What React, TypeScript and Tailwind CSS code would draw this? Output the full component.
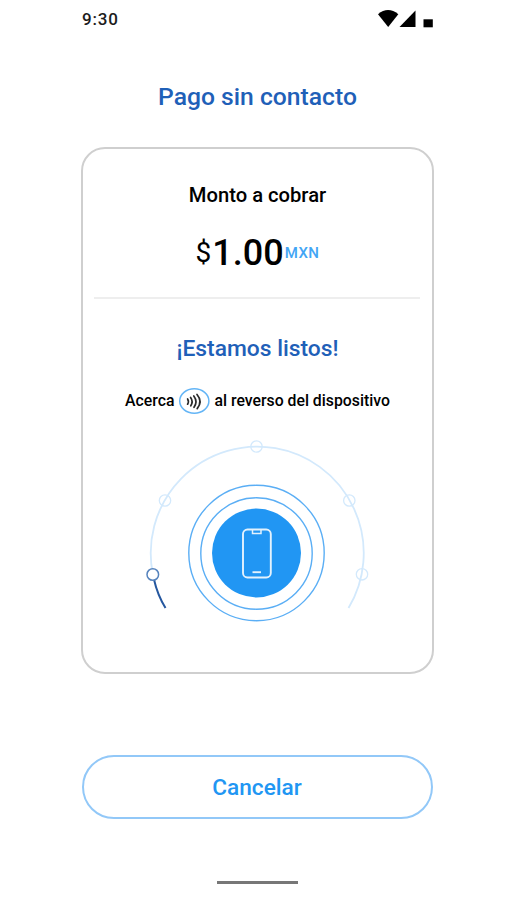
function StatusIcons() {
  return (
    <svg width="58" height="20" viewBox="376 9 58 20" className="shrink-0" fill="#000">
      <path d="M378 14.2Q388 6 398.300 14.200L388.200 27Z" />
      <path d="M399.500 27L415.500 10.500V27Z" />
      <rect x="423.500" y="19.300" width="9.300" height="8" />
    </svg>
  );
}

function ContactlessBadge() {
  return (
    <svg width="32" height="28" viewBox="178 387 32 28" className="mx-[4px] shrink-0" fill="none">
      <ellipse cx="194.300" cy="401" rx="14.600" ry="12.200" stroke="#64b5f6" strokeWidth="1.500" />
      <g stroke="#2a2a2a" strokeWidth="1.700" strokeLinecap="round">
        <path d="M187.600 399Q189.200 401.500 187.600 404.200" />
        <path d="M190.600 397.500Q193.500 401.500 190.800 405.800" />
        <path d="M193.800 396Q198 401.500 194 407.300" />
        <path d="M197 394.500Q203 401.500 197.200 408.600" />
      </g>
    </svg>
  );
}

const idleNodes = [
  [165, 500.5],
  [256.5, 446.5],
  [349.3, 500.5],
  [362, 574.3],
];

function TapAnimation() {
  return (
    <svg width="234" height="190" viewBox="140 438 234 190" className="shrink-0" fill="none">
      <path d="M152.800 574A106.500 106.500 0 1 1 348.500 608" stroke="#d3e9fc" strokeWidth="1.800" />
      {idleNodes.map(([x, y]) => (
        <circle key={x} cx={x} cy={y} r="5.700" stroke="#d3e9fc" strokeWidth="1.300" />
      ))}
      <path d="M154 579.500Q157.500 595 165.500 608" stroke="#25579f" strokeWidth="2" />
      <circle cx="152.800" cy="574.500" r="5.800" stroke="#5683bd" strokeWidth="1.500" fill="#fff" />
      <circle cx="256.500" cy="553" r="67.700" stroke="#5aaef5" strokeWidth="1.400" />
      <circle cx="256.500" cy="553.500" r="55.700" stroke="#5aaef5" strokeWidth="1.400" />
      <circle cx="256.500" cy="553" r="44.500" fill="#2196f3" />
      <rect x="243" y="529.500" width="27.800" height="48" rx="4.500" stroke="#e3f2fd" strokeWidth="1.900" />
      <path d="M252.500 530V533.500H261V530" stroke="#e3f2fd" strokeWidth="1.500" />
      <path d="M252.500 572.200H261" stroke="#e3f2fd" strokeWidth="1.900" />
    </svg>
  );
}

export default function App() {
  return (
    <main className="flex h-[900px] w-[506px] flex-col overflow-hidden bg-white pl-[81px] font-['Roboto',sans-serif] font-medium text-black">
      <div className="flex w-[353px] flex-1 flex-col">
        <header className="flex h-[38px] items-center justify-between">
          <span className="pl-px text-[17px] leading-none tracking-[0.800px] text-[#1c1c1c]">9:30</span>
          <StatusIcons />
        </header>

        <h1 className="mt-[43px] text-center text-[24.700px] leading-8 text-[#1f60b8]">Pago sin contacto</h1>

        <section className="mt-[34px] flex h-[527px] flex-col items-center rounded-[24px] border-2 border-[#cfcfcf]">
          <h2 className="mt-[34px] text-[20.200px] leading-6">Monto a cobrar</h2>
          <p className="mt-[24px] flex h-[44px] items-center whitespace-nowrap leading-none">
            <span className="text-[28px] font-normal">$</span>
            <span className="pl-px text-[36px]">1.00</span>
            <span className="pl-px text-[15px] tracking-[0.500px] text-[#42a5f5]">MXN</span>
          </p>
          <hr className="mt-[22px] mr-px w-[326px] border-t-2 border-[#eeeeee]" />
          <h3 className="mt-[34px] text-[22.800px] leading-8 text-[#1f60b8]">¡Estamos listos!</h3>
          <p className="mt-[22px] flex h-[28px] items-center whitespace-nowrap text-[15.800px] leading-none">
            Acerca
            <ContactlessBadge />
            al reverso del dispositivo
          </p>
          <div className="mt-[23px] mr-[2px] flex">
            <TapAnimation />
          </div>
        </section>

        <button className="mx-px mt-[81px] h-[64px] rounded-full border-2 border-[#92c8f8] pt-[2px] pr-px text-[22.600px] text-[#2196f3]">
          Cancelar
        </button>

        <div className="mt-[62px] h-[3px] w-[81px] self-center bg-[#777777]" />
      </div>
    </main>
  );
}
